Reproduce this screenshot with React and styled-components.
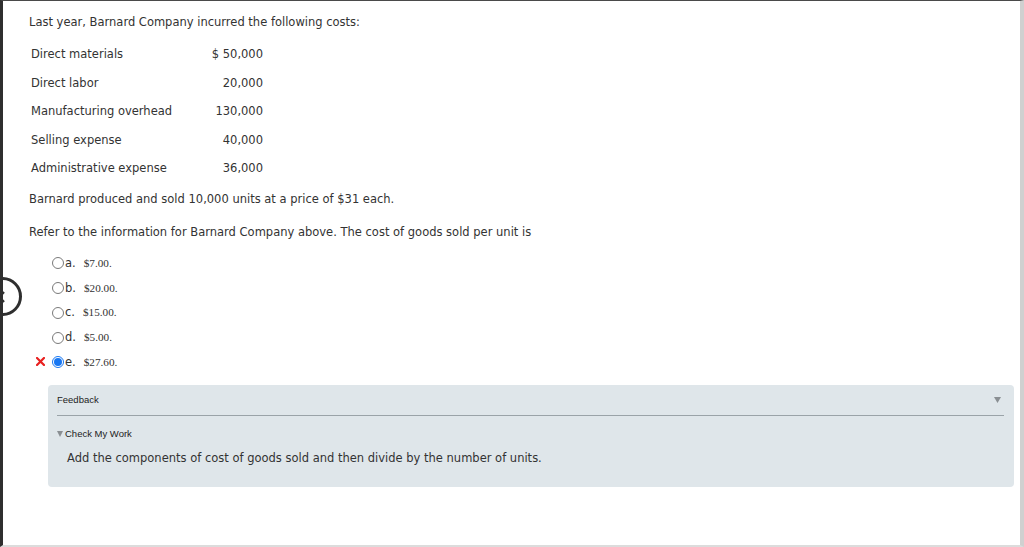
import React from "react";
import styled, { createGlobalStyle } from "styled-components";

const GlobalStyle = createGlobalStyle`
  html, body {
    margin: 0;
    padding: 0;
    background: #ffffff;
  }
  body {
    font-family: "DejaVu Sans", Verdana, sans-serif;
    color: #333333;
  }
`;

const Page = styled.div`
  position: relative;
  box-sizing: border-box;
  width: 1024px;
  height: 547px;
  overflow: hidden;
  border-top: 1px solid #4a4a4a;
  border-left: 3px solid #2f2f2f;
  border-right: 4px solid #d0d0d0;
  border-bottom: 2px solid #dcdcdc;
  background: #ffffff;
`;

const Content = styled.div`
  padding: 14px 0 0 26px;
  font-size: 11.5px;
  line-height: 14px;
`;

const Para = styled.p`
  margin: ${(p) => p.$top || 0}px 0 0 0;
`;

const CostTable = styled.div`
  display: grid;
  grid-template-columns: 180px 52px;
  grid-auto-rows: 28.5px;
  align-items: center;
  margin: 11px 0 0 2px;
`;

const Label = styled.div``;

const Amount = styled.div`
  text-align: right;
`;

const Options = styled.div`
  display: flex;
  flex-direction: column;
  margin: 12px 0 0 7px;
`;

const OptionRow = styled.div`
  display: flex;
  align-items: center;
  height: 24.75px;
`;

const MarkSlot = styled.div`
  width: 16px;
  display: flex;
  align-items: center;
`;

const Radio = styled.span`
  box-sizing: border-box;
  width: 12px;
  height: 12px;
  border-radius: 50%;
  border: 1px solid ${(p) => (p.$checked ? "#1877f2" : "#7a7a7a")};
  background: #ffffff;
  display: flex;
  align-items: center;
  justify-content: center;
  margin-top: 1px;

  &::after {
    content: "";
    display: ${(p) => (p.$checked ? "block" : "none")};
    width: 8px;
    height: 8px;
    border-radius: 50%;
    background: #1877f2;
  }
`;

const Letter = styled.span`
  margin-left: 1px;
  font-size: 11.5px;
`;

const Choice = styled.span`
  margin-left: 8px;
  font-family: "Liberation Serif", "Times New Roman", serif;
  font-size: 11.2px;
  color: #333333;
`;

const Panel = styled.div`
  box-sizing: border-box;
  width: 966px;
  height: 102px;
  margin: 11px 0 0 19px;
  padding: 8px 10px 0 9px;
  background: #dfe6ea;
  border-radius: 4px;
`;

const PanelHead = styled.div`
  display: flex;
  justify-content: space-between;
  align-items: center;
  height: 14px;
  padding-bottom: 8px;
  border-bottom: 1px solid #9aa3a8;
  font-family: "Liberation Sans", Arial, sans-serif;
  font-size: 9.5px;
  color: #222222;
`;

const Toggle = styled.svg`
  display: block;
  margin-right: 3px;
`;

const CheckWork = styled.div`
  display: flex;
  align-items: center;
  gap: 2px;
  margin-top: 11px;
  font-family: "Liberation Sans", Arial, sans-serif;
  font-size: 9.5px;
  color: #222222;
`;

const Hint = styled.div`
  margin: 10px 0 0 10px;
  font-size: 11.5px;
  line-height: 14px;
`;

const BackButton = styled.div`
  position: absolute;
  left: -20px;
  top: 276px;
  box-sizing: border-box;
  width: 39px;
  height: 39px;
  border-radius: 50%;
  border: 3px solid #2f2f2f;
  background: #ffffff;
  display: flex;
  align-items: center;
  justify-content: flex-end;
  padding-right: 14px;
`;

const costs = [
  ["Direct materials", "$ 50,000"],
  ["Direct labor", "20,000"],
  ["Manufacturing overhead", "130,000"],
  ["Selling expense", "40,000"],
  ["Administrative expense", "36,000"],
];

const choices = [
  ["a", "$7.00."],
  ["b", "$20.00."],
  ["c", "$15.00."],
  ["d", "$5.00."],
  ["e", "$27.60.", true],
];

const WrongMark = () => (
  <svg width="9" height="9" viewBox="0 0 9 9">
    <path d="M1 1 L8 8 M8 1 L1 8" stroke="#e8201f" strokeWidth="2.2" strokeLinecap="square" />
  </svg>
);

export default function App() {
  return (
    <>
      <GlobalStyle />
      <Page>
        <Content>
          <Para>Last year, Barnard Company incurred the following costs:</Para>
          <CostTable>
            {costs.map(([label, amount]) => (
              <React.Fragment key={label}>
                <Label>{label}</Label>
                <Amount>{amount}</Amount>
              </React.Fragment>
            ))}
          </CostTable>
          <Para $top={9}>Barnard produced and sold 10,000 units at a price of $31 each.</Para>
          <Para $top={19}>
            Refer to the information for Barnard Company above. The cost of goods sold per unit is
          </Para>
          <Options>
            {choices.map(([letter, value, picked]) => (
              <OptionRow key={letter}>
                <MarkSlot>{picked && <WrongMark />}</MarkSlot>
                <Radio $checked={picked} />
                <Letter>{letter}.</Letter>
                <Choice>{value}</Choice>
              </OptionRow>
            ))}
          </Options>
          <Panel>
            <PanelHead>
              <span>Feedback</span>
              <Toggle width="7" height="6" viewBox="0 0 7 6">
                <path d="M0 0 H7 L3.5 6 Z" fill="#8a8f93" />
              </Toggle>
            </PanelHead>
            <CheckWork>
              <svg width="6" height="6" viewBox="0 0 6 6">
                <path d="M0 0 H6 L3 6 Z" fill="#8a8f93" />
              </svg>
              <span>Check My Work</span>
            </CheckWork>
            <Hint>Add the components of cost of goods sold and then divide by the number of units.</Hint>
          </Panel>
        </Content>
        <BackButton>
          <svg width="8" height="12" viewBox="0 0 8 12">
            <path d="M7 1 L2 6 L7 11" fill="none" stroke="#2f2f2f" strokeWidth="2.4" />
          </svg>
        </BackButton>
      </Page>
    </>
  );
}
